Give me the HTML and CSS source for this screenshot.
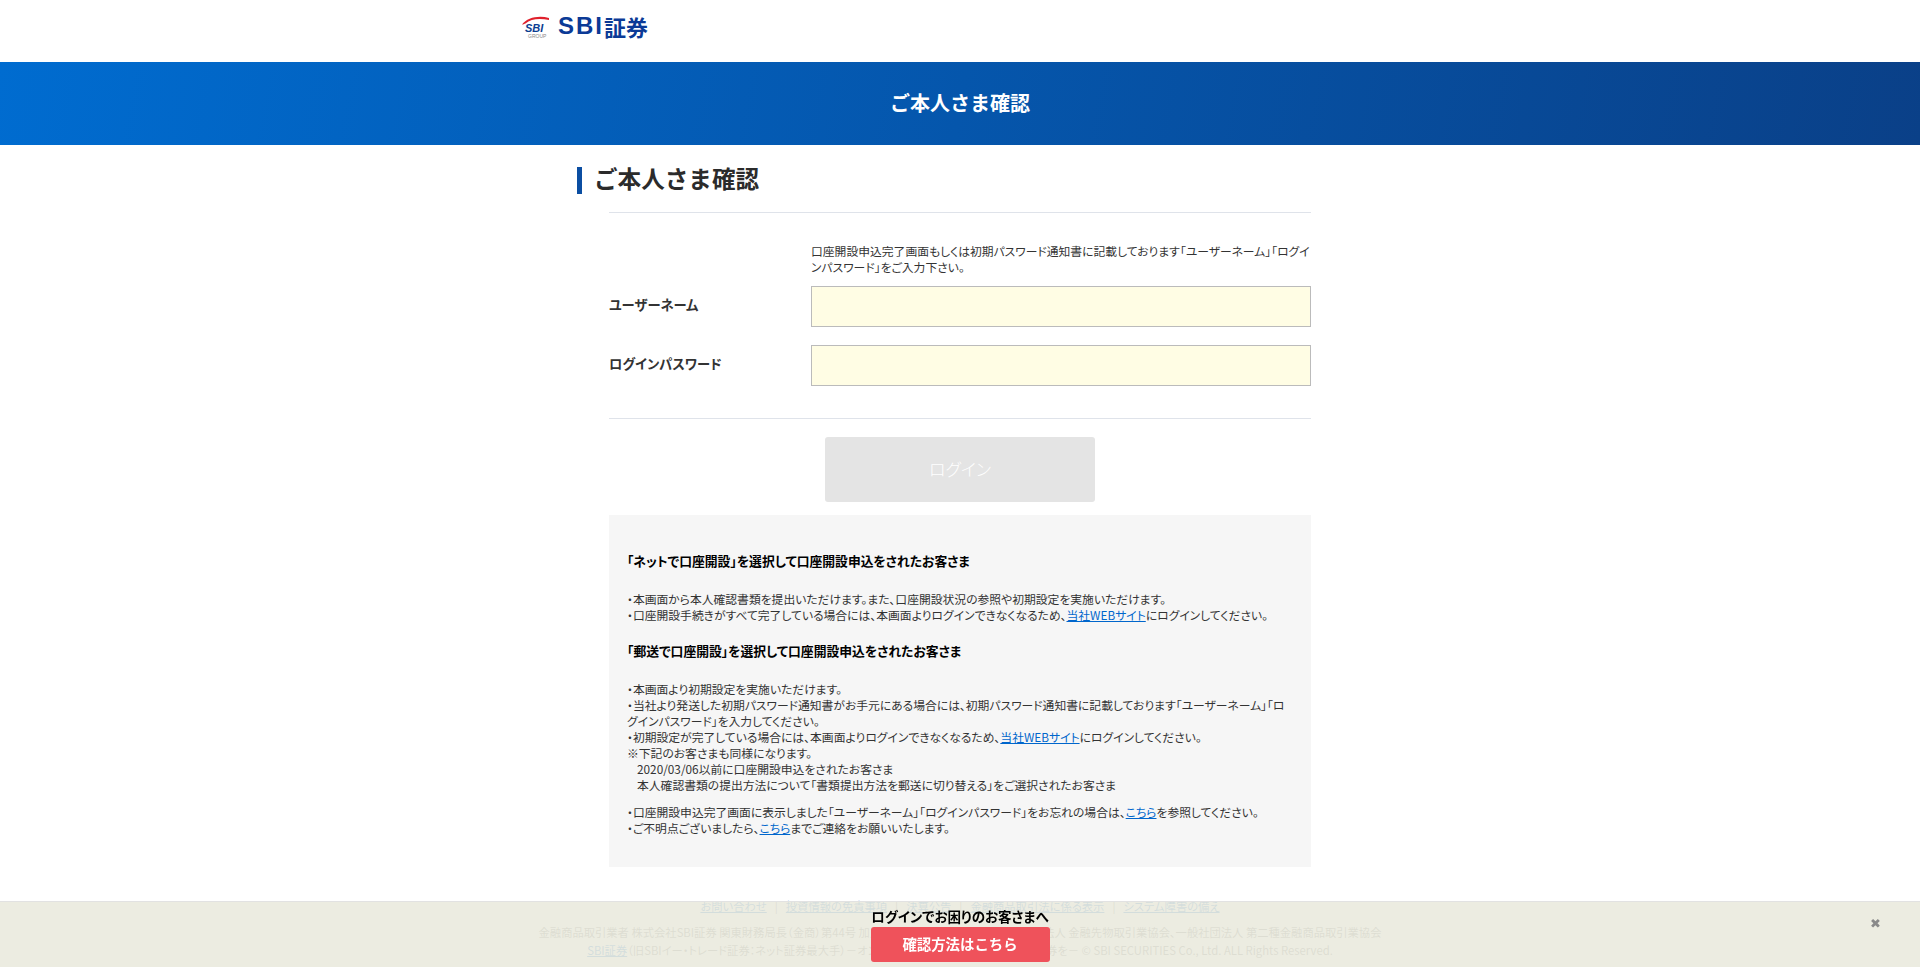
FILE: index.html
```html
<!DOCTYPE html>
<html lang="ja">
<head>
    <meta charset="UTF-8">
    <title>ご本人さま確認</title>
    <link rel="stylesheet" href="styles.css">
</head>
<body>

<header class="site-header">
    <div class="logo">
        <svg class="logo-mark" width="28" height="24" viewBox="0 0 28 24">
            <path d="M0 9.5 C5 2.5 17 0 27 3 L27 5 C18 3 9 3.5 3.5 8.5 C2.5 9 1 9.5 0 9.5 Z" fill="#e0202c"/>
            <text x="3" y="17" class="logo-sbi">SBI</text>
            <text x="6" y="22.5" class="logo-group">GROUP</text>
        </svg>
        <span class="logo-name"><span class="logo-sbi-word">SBI</span>証券</span>
    </div>
</header>

<div class="title-band">ご本人さま確認</div>

<main class="main">
    <h1 class="page-title">ご本人さま確認</h1>

    <div class="form-area">
        <p class="form-note">口座開設申込完了画面もしくは初期パスワード通知書に記載しております「ユーザーネーム」「ログインパスワード」をご入力下さい。</p>
        <div class="form-row">
            <label for="username">ユーザーネーム</label>
            <input type="text" id="username">
        </div>
        <div class="form-row">
            <label for="password">ログインパスワード</label>
            <input type="password" id="password">
        </div>

        <div class="btn-row">
            <button class="btn-login" disabled>ログイン</button>
        </div>

        <div class="info-box">
            <h2>「ネットで口座開設」を選択して口座開設申込をされたお客さま</h2>
            <p>・本画面から本人確認書類を提出いただけます。また、口座開設状況の参照や初期設定を実施いただけます。<br>
            ・口座開設手続きがすべて完了している場合には、本画面よりログインできなくなるため、<a href="#">当社WEBサイト</a>にログインしてください。</p>

            <h2>「郵送で口座開設」を選択して口座開設申込をされたお客さま</h2>
            <p>・本画面より初期設定を実施いただけます。<br>
            ・当社より発送した初期パスワード通知書がお手元にある場合には、初期パスワード通知書に記載しております「ユーザーネーム」「ログインパスワード」を入力してください。<br>
            ・初期設定が完了している場合には、本画面よりログインできなくなるため、<a href="#">当社WEBサイト</a>にログインしてください。<br>
            ※下記のお客さまも同様になります。</p>
            <p class="indent">2020/03/06以前に口座開設申込をされたお客さま<br>
            本人確認書類の提出方法について「書類提出方法を郵送に切り替える」をご選択されたお客さま</p>
            <p class="info-last">・口座開設申込完了画面に表示しました「ユーザーネーム」「ログインパスワード」をお忘れの場合は、<a href="#">こちら</a>を参照してください。<br>
            ・ご不明点ございましたら、<a href="#">こちら</a>までご連絡をお願いいたします。</p>
        </div>
    </div>
</main>

<footer class="site-footer">
    <ul class="footer-links">
        <li><a href="#">お問い合わせ</a></li>
        <li><a href="#">投資情報の免責事項</a></li>
        <li><a href="#">決算公告</a></li>
        <li><a href="#">金融商品取引法に係る表示</a></li>
        <li><a href="#">システム障害の備え</a></li>
    </ul>
    <p>金融商品取引業者 株式会社SBI証券 関東財務局長（金商）第44号 加入協会 / 日本証券業協会、一般社団法人 金融先物取引業協会、一般社団法人 第二種金融商品取引業協会</p>
    <p><a href="#">SBI証券</a>（旧SBIイー・トレード証券：ネット証券最大手）－オンライントレードで投資家に優れた証券を－ © SBI SECURITIES Co., Ltd. ALL Rights Reserved.</p>
</footer>

<div class="help-bar">
    <p class="help-text">ログインでお困りのお客さまへ</p>
    <a class="help-btn" href="#">確認方法はこちら</a>
    <span class="help-close">✖</span>
</div>

</body>
</html>
```

FILE: styles.css
```css
body {
    margin: 0;
    font-family: "Noto Sans CJK JP", "Noto Sans", sans-serif;
    font-size: 11.8px;
    line-height: 16px;
    font-feature-settings: "palt";
    color: #333;
    background: #fff;
}
a {
    color: #0066cc;
    text-decoration: underline;
}
p {
    margin: 0;
}

/* header */
.site-header {
    height: 62px;
    box-sizing: border-box;
    width: 876px;
    margin: 0 auto;
    padding-top: 15px;
}
.logo {
    display: flex;
    align-items: flex-start;
    gap: 8px;
}
.logo-sbi {
    font-family: "Liberation Sans", sans-serif;
    font-size: 11px;
    font-weight: bold;
    font-style: italic;
    fill: #0b3d91;
}
.logo-group {
    font-family: "Liberation Sans", sans-serif;
    font-size: 5px;
    fill: #888;
}
.logo-name {
    display: flex;
    align-items: center;
    height: 22px;
    font-size: 22px;
    line-height: 22px;
    font-weight: bold;
    color: #0b3a96;
    font-feature-settings: normal;
}
.logo-sbi-word {
    font-family: "Liberation Sans", sans-serif;
    font-size: 24px;
    letter-spacing: 2px;
}
.title-band {
    height: 83px;
    line-height: 81px;
    text-align: center;
    font-size: 20px;
    font-weight: bold;
    font-feature-settings: normal;
    color: #fff;
    background: linear-gradient(100deg, #006cd0 0%, #0a4088 100%);
}

/* main */
.main {
    width: 766px;
    margin: 0 auto;
    padding-top: 22px;
}
.page-title {
    margin: 0;
    height: 27px;
    padding-left: 12px;
    border-left: 5px solid #0b4ea2;
    font-size: 23.6px;
    line-height: 23px;
    font-weight: bold;
    font-feature-settings: normal;
    color: #2b2b2b;
}
.form-area {
    width: 702px;
    margin: 18px auto 0;
    padding-top: 30px;
    border-top: 1px solid #dfe3ea;
}
.form-note {
    width: 500px;
    margin-left: 202px;
    margin-bottom: 11px;
}
.form-row {
    display: grid;
    grid-template-columns: 202px 500px;
    align-items: center;
    margin-bottom: 18px;
}
.form-row label {
    font-size: 13.3px;
    font-weight: bold;
    position: relative;
    top: -2px;
}
.form-row input {
    box-sizing: border-box;
    height: 41px;
    width: 500px;
    padding: 0 8px;
    background: #fffde4;
    border: 1px solid #bbb;
}
.btn-row {
    margin-top: 32px;
    padding-top: 18px;
    border-top: 1px solid #dfe3ea;
    text-align: center;
}
.btn-login {
    display: block;
    width: 270px;
    height: 65px;
    margin: 0 auto;
    padding-bottom: 3px;
    background: #e4e4e4;
    border: none;
    border-radius: 3px;
    color: #fff;
    font-family: inherit;
    font-size: 17px;
    font-weight: 300;
    font-feature-settings: "palt";
}

/* info box */
.info-box {
    margin-top: 13px;
    height: 352px;
    box-sizing: border-box;
    padding: 38px 18px 0;
    background: #f6f6f6;
}
.info-box h2 {
    margin: 0 0 22px;
    font-size: 12.8px;
    line-height: 16px;
    font-weight: bold;
    color: #000;
}
.info-box p {
    margin-bottom: 20px;
}
.info-box p.indent {
    margin: -20px 0 11px;
    padding-left: 10px;
}
.info-box p.info-last {
    margin: 0;
}

/* footer */
.site-footer {
    margin-top: 31px;
    text-align: center;
    font-size: 11.3px;
    color: #666;
}
.footer-links {
    list-style: none;
    margin: 0 0 9px;
    padding: 0;
    display: flex;
    justify-content: center;
}
.footer-links li + li::before {
    content: "|";
    margin: 0 8px;
    color: #666;
}
.site-footer p {
    line-height: 18px;
}

/* bottom notice */
.help-bar {
    position: fixed;
    left: 0;
    right: 0;
    bottom: 0;
    height: 66px;
    box-sizing: border-box;
    border-top: 1px solid #e2e2e2;
    background: rgba(234, 234, 222, 0.9);
    text-align: center;
}
.help-text {
    margin-top: 5px;
    font-size: 13.5px;
    line-height: 18px;
    font-weight: bold;
    color: #000;
}
.help-btn {
    display: block;
    width: 179px;
    height: 35px;
    margin: 2px auto 0;
    line-height: 34px;
    background: #ef525b;
    border-radius: 3px;
    color: #fff;
    font-size: 14.4px;
    font-weight: bold;
    font-feature-settings: normal;
    text-decoration: none;
}
.help-close {
    position: absolute;
    top: 12px;
    right: 39px;
    font-size: 13px;
    line-height: 18px;
    color: #8a8a8a;
}
```
